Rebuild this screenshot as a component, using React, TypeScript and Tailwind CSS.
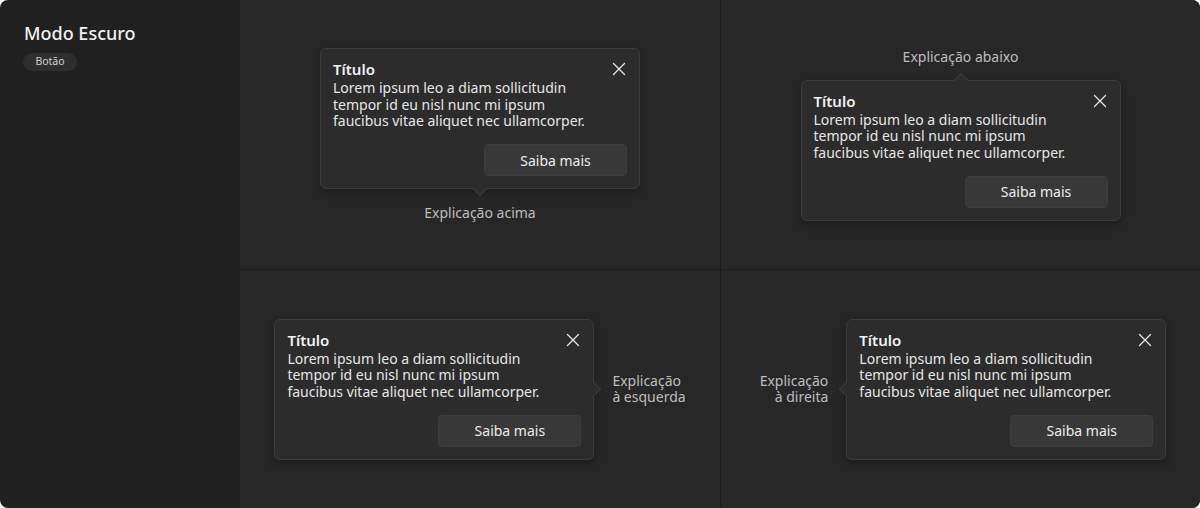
import React from "react";

const font = { fontFamily: '"Noto Sans", "Open Sans", sans-serif' };

function CloseIcon() {
  return (
    <svg width="16" height="16" viewBox="0 0 16 16" fill="none" stroke="#e6e6e6" strokeWidth="1.3" strokeLinecap="round">
      <path d="M2.5 2.5 L13.5 13.5 M13.5 2.5 L2.5 13.5" />
    </svg>
  );
}

type Side = "bottom" | "top" | "right" | "left";

function Pointer({ side }: { side: Side }) {
  const base = "absolute w-[10px] h-[10px] bg-[#2c2c2c] border-[#3c3c3c] rotate-45";
  if (side === "bottom")
    return <div className={`${base} border-r border-b left-1/2 -ml-[5px] -bottom-[6px]`} />;
  if (side === "top")
    return <div className={`${base} border-l border-t left-1/2 -ml-[5px] -top-[6px]`} />;
  if (side === "right")
    return <div className={`${base} border-r border-t top-1/2 -mt-[5px] -right-[6px]`} />;
  return <div className={`${base} border-l border-b top-1/2 -mt-[5px] -left-[6px]`} />;
}

function Card({ side }: { side: Side }) {
  return (
    <div className="relative w-[320px] rounded-[6px] border border-[#3c3c3c] bg-[#2c2c2c] shadow-[0_4px_10px_rgba(0,0,0,0.28)] px-3 pt-[10px] pb-3">
      <Pointer side={side} />
      <div className="absolute top-[12px] right-[12px]">
        <CloseIcon />
      </div>
      <div className="text-[15px] leading-[21px] font-semibold text-[#f2f2f2]">Título</div>
      <div className="text-[14px] leading-[16.5px] text-[#e6e6e6] w-[270px]">
        Lorem ipsum leo a diam sollicitudin tempor id eu nisl nunc mi ipsum faucibus vitae aliquet nec ullamcorper.
      </div>
      <div className="flex justify-end mt-[14.5px]">
        <div className="w-[143px] h-[32px] rounded-[4px] bg-[#383838] border border-[#3e3e3e] flex items-center justify-center text-[14px] text-[#ececec]">
          Saiba mais
        </div>
      </div>
    </div>
  );
}

export default function App() {
  return (
    <div className="w-[1200px] h-[508px] bg-white" style={font}>
      <div className="flex h-full rounded-[8px] overflow-hidden">
        <div className="w-[240px] bg-[#202020] pl-6 pt-[21px]">
          <div className="text-[18px] leading-[24px] font-medium text-[#f0f0f0]">Modo Escuro</div>
          <div className="mt-[8px] -ml-[1px] inline-flex items-center justify-center h-[18px] w-[54px] rounded-full bg-[#2e2e2e] text-[10.5px] text-[#d0d0d0]">
            Botão
          </div>
        </div>
        <div className="flex-1 grid grid-cols-[480px_1fr] grid-rows-[269px_1fr] gap-px bg-[#1d1d1d]">
          <div className="bg-[#272727] flex flex-col items-center justify-center gap-[14px] pt-[1px]">
            <Card side="bottom" />
            <div className="text-[14px] leading-[19px] text-[#bdbdbd]">Explicação acima</div>
          </div>
          <div className="bg-[#272727] flex flex-col items-center justify-center gap-[14px] pb-[2px]">
            <div className="text-[14px] leading-[19px] text-[#bdbdbd]">Explicação abaixo</div>
            <Card side="top" />
          </div>
          <div className="bg-[#272727] flex items-center justify-center gap-[18px]">
            <Card side="right" />
            <div className="text-[14px] leading-[16px] text-[#bdbdbd]">
              <div>Explicação</div>
              <div>à esquerda</div>
            </div>
          </div>
          <div className="bg-[#272727] flex items-center justify-center gap-[18px] pl-[5px]">
            <div className="text-[14px] leading-[16px] text-[#bdbdbd] text-right">
              <div>Explicação</div>
              <div>à direita</div>
            </div>
            <Card side="left" />
          </div>
        </div>
      </div>
    </div>
  );
}
